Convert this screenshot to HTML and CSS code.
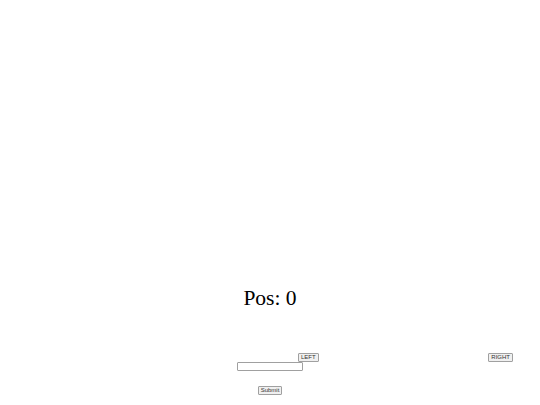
FILE: index.html
```html
<!DOCTYPE html>
<html>
<head>
<meta charset="utf-8">
<link rel="stylesheet" href="styles.css">
</head>
<body>
<main class="page">
  <h1 class="pos">Pos: 0</h1>
  <div class="controls">
    <button class="btn">LEFT</button>
    <button class="btn">RIGHT</button>
  </div>
  <div class="field-row">
    <input class="field" type="text">
  </div>
  <div class="submit-row">
    <button class="btn">Submit</button>
  </div>
</main>
</body>
</html>
```
FILE: styles.css
```css
html, body {
  margin: 0;
  padding: 0;
  background: #fff;
}
.page {
  width: 540px;
  height: 405px;
  padding-top: 284px;
  box-sizing: border-box;
  font-family: "Liberation Serif", serif;
}
.pos {
  margin: 0;
  font-size: 21.5px;
  font-weight: normal;
  line-height: 28px;
  text-align: center;
  color: #000;
}
.controls {
  display: flex;
  justify-content: space-between;
  padding-left: 298px;
  padding-right: 27px;
  margin-top: 41px;
}
.btn {
  font-family: "Liberation Sans", sans-serif;
  font-size: 6px;
  line-height: 7px;
  height: 9px;
  box-sizing: border-box;
  padding: 0 2px;
  margin: 0;
  color: #333;
  background: #f0f0f0;
  border: 1px solid #a0a0a0;
  border-radius: 1px;
}
.field-row {
  display: flex;
  justify-content: center;
}
.field {
  width: 66px;
  height: 9px;
  box-sizing: border-box;
  margin: 0;
  padding: 0;
  background: #fff;
  border: 1px solid #a0a0a0;
  border-radius: 1px;
}
.submit-row {
  display: flex;
  justify-content: center;
  margin-top: 15px;
}
```
